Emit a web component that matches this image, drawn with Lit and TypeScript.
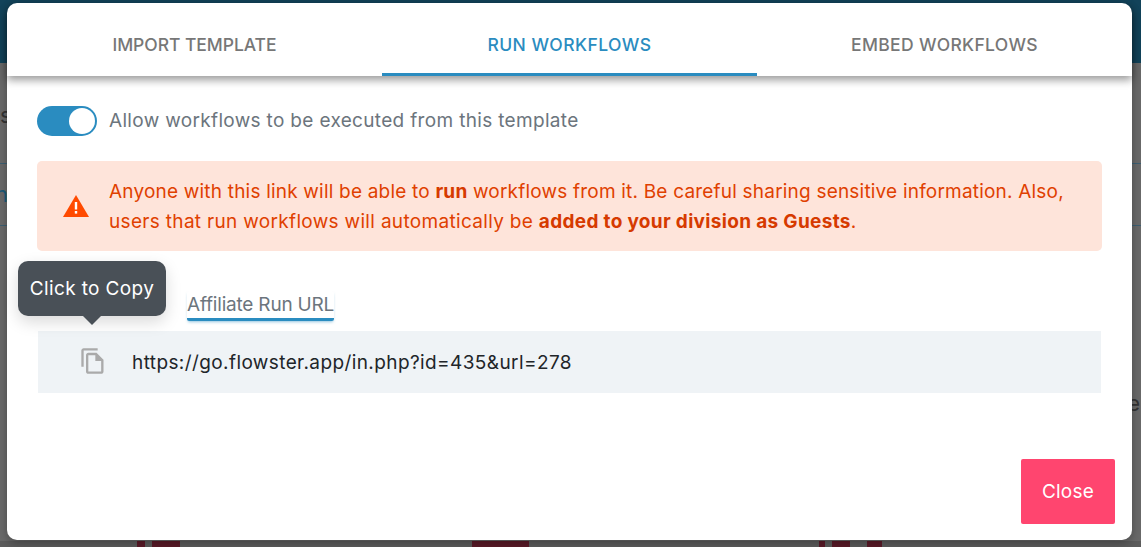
import { LitElement, html, css } from "lit";
import { customElement } from "lit/decorators.js";

@customElement("app-root")
export class AppRoot extends LitElement {
  static styles = css`
    :host { display: block; width: 1141px; height: 547px; position: relative; overflow: hidden; background: #696969; font-family: Inter, "Noto Sans", sans-serif; }
    .page { height: 100%; display: flex; flex-direction: column; }
    .topbar { height: 63px; background: #12435a; flex: none; }
    .behind { flex: 1; display: flex; flex-direction: column; color: #333; font-size: 22px; line-height: 26px; }
    .frag-s { margin-top: 39px; height: 26px; }
    .band { margin-top: 35px; height: 61px; border-top: 1px solid #3d5f72; border-bottom: 1px solid #3d5f72; color: #1b5a78; line-height: 61px; }
    .band span { margin-left: -5px; }
    .frag-e { margin-top: 164px; text-align: right; margin-right: 1px; }
    .reds { margin-top: auto; height: 6px; display: flex; background: #5c5c5c; }
    .red { height: 100%; background: #5a1a28; flex: none; }
    .modal { position: absolute; left: 7px; top: 3px; width: 1125px; height: 537px; background: #fff; border-radius: 10px; display: flex; flex-direction: column; box-shadow: 0 3px 10px rgba(0,0,0,.3); }
    .tabs { display: grid; grid-template-columns: 375px 375px 375px; height: 73px; flex: none; box-shadow: 0 4px 8px rgba(0,0,0,.4); border-radius: 10px 10px 0 0; }
    .tab { display: flex; align-items: center; justify-content: center; padding-top: 10px; box-sizing: border-box; font-size: 17.5px; font-weight: 500; color: #777; }
    .tab.import { letter-spacing: -.05px; }
    .tab.run { letter-spacing: .46px; }
    .tab.embed { letter-spacing: .33px; }
    .tab.on { color: #2a8cc0; box-shadow: inset 0 -3px 0 #2a8cc0; }
    .body { flex: 1; display: flex; flex-direction: column; padding: 30px 30px 16px 30px; }
    .toggle-row { display: flex; align-items: center; gap: 12px; height: 30px; color: #6c757d; font-size: 19px; letter-spacing: .33px; padding-bottom: 0; }
    .toggle-row .txt { margin-bottom: 2px; }
    .toggle { width: 60px; height: 30px; border-radius: 15px; background: #2a8cc0; display: flex; justify-content: flex-end; align-items: center; padding: 0 2px; box-sizing: border-box; flex: none; }
    .knob { width: 26px; height: 26px; border-radius: 50%; background: #fff; }
    .alert { margin-top: 25px; height: 90px; box-sizing: border-box; background: #fee4da; border-radius: 5px; color: #e04000; font-size: 19px; line-height: 30px; display: flex; align-items: center; padding: 0 30px 0 26px; gap: 20px; }
    .alert svg { flex: none; }
    .alert-text { padding-top: 2px; }
    .alert b { font-weight: 700; color: #d63a00; }
    .l1 { letter-spacing: .2px; display: block; }
    .l2 { letter-spacing: .32px; display: block; }
    .label-row { margin-top: 40px; padding-left: 150px; height: 33px; color: #6c757d; font-size: 19px; letter-spacing: -.2px; line-height: 28px; }
    .label { display: inline-block; height: 27px; border-bottom: 3px solid #2a8cc0; border-radius: 2px; box-shadow: 0 2px 3px -1px rgba(42,140,192,.5); }
    .url { margin-top: 7px; margin-left: 1px; height: 62px; width: 1063px; background: #eff3f6; display: flex; align-items: center; padding-left: 41px; gap: 25px; box-sizing: border-box; color: #212529; font-size: 19px; letter-spacing: .4px; }
    .url svg { margin-top: -2px; }
    .spacer { flex: 1; }
    .close { align-self: flex-end; margin-right: -13px; width: 94px; height: 65px; background: #ff456f; color: #fff; border: 0; border-radius: 2px; font: inherit; font-size: 19px; letter-spacing: .25px; }
    .tip { position: absolute; left: 18px; top: 261px; width: 148px; height: 55px; background: #495057; color: #fff; border-radius: 10px; display: flex; align-items: center; justify-content: center; font-size: 19px; letter-spacing: .38px; box-shadow: 0 6px 16px rgba(0,0,0,.15); }
    .tip::after { content: ""; position: absolute; left: 65px; bottom: -9px; border-left: 9px solid transparent; border-right: 9px solid transparent; border-top: 9px solid #495057; }
  `;
  private reds: [number, number][] = [[137,8],[152,28],[472,57],[819,6],[832,18],[867,15]];
  render() {
    let x = 0;
    const reds = this.reds.map(([l, w]) => { const m = l - x; x = l + w; return html`<div class="red" style="margin-left:${m}px;width:${w}px"></div>`; });
    return html`
      <div class="page"><div class="topbar"></div>
        <div class="behind">
          <div class="frag-s">s</div>
          <div class="band"><span>n</span></div>
          <div class="frag-e">e</div>
          <div class="reds">${reds}</div>
        </div>
      </div>
      <div class="modal">
        <div class="tabs">
          <div class="tab import">IMPORT TEMPLATE</div>
          <div class="tab run on">RUN WORKFLOWS</div>
          <div class="tab embed">EMBED WORKFLOWS</div>
        </div>
        <div class="body">
          <div class="toggle-row"><span class="toggle"><span class="knob"></span></span><span class="txt">Allow workflows to be executed from this template</span></div>
          <div class="alert">
            <svg width="26" height="22" viewBox="0 0 26 22"><path d="M13 0 L26 22 H0 Z" fill="#ff4a00"/><rect x="11.8" y="7" width="2.4" height="7.5" fill="#fff"/><rect x="11.8" y="16" width="2.4" height="2.6" fill="#fff"/></svg>
            <div class="alert-text"><span class="l1">Anyone with this link will be able to <b>run</b> workflows from it. Be careful sharing sensitive information. Also,</span><span class="l2">users that run workflows will automatically be <b>added to your division as Guests</b>.</span></div>
          </div>
          <div class="label-row"><span class="label">Affiliate Run URL</span></div>
          <div class="url">
            <svg width="28" height="28" viewBox="0 0 24 24" fill="#aaa"><path d="M16 1H4c-1.1 0-2 .9-2 2v14h2V3h12V1zm-1 4H8c-1.1 0-1.99.9-1.99 2L6 21c0 1.1.89 2 1.99 2H19c1.1 0 2-.9 2-2V11l-6-6zM8 21V7h6v5h5v9H8z"/></svg>
            <span>https://go.flowster.app/in.php?id=435&url=278</span>
          </div>
          <div class="spacer"></div>
          <button class="close">Close</button>
        </div>
      </div>
      <div class="tip">Click to Copy</div>
    `;
  }
}
